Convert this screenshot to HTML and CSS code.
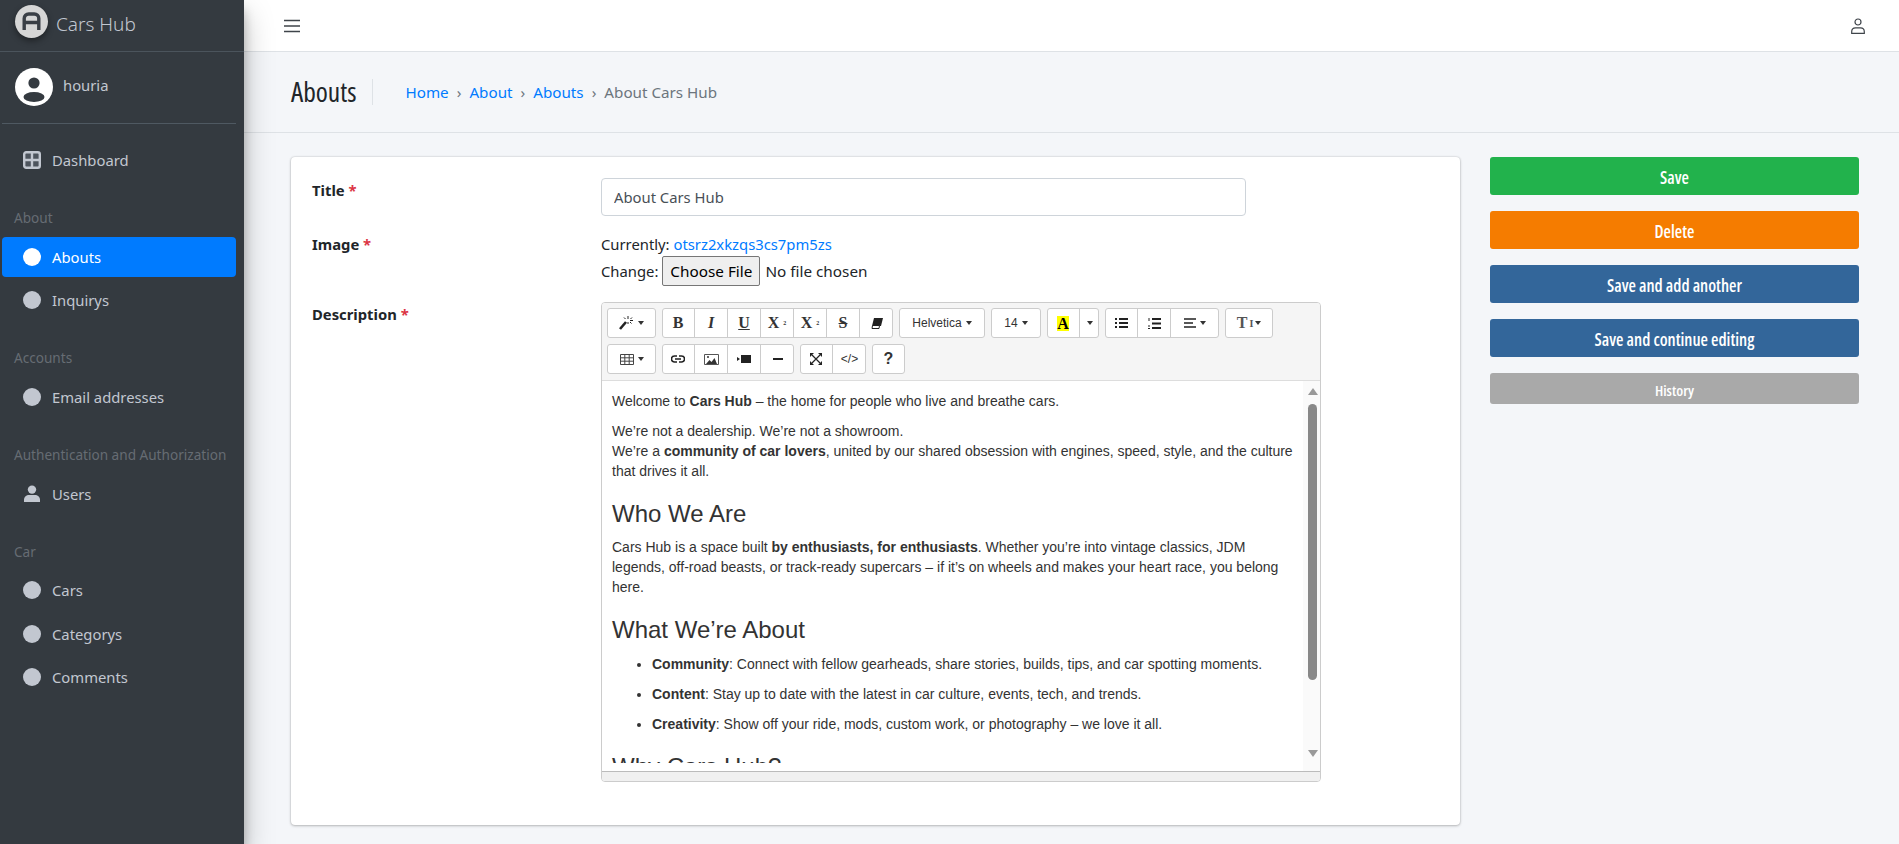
FILE: index.html
```html
<!DOCTYPE html>
<html lang="en">
<head>
    <meta charset="UTF-8">
    <meta name="viewport" content="width=device-width, initial-scale=1.0">
    <title>About Cars Hub</title>
    <link rel="stylesheet" href="styles.css">
</head>
<body>

<!-- Sidebar -->
<aside class="sidebar">
    <div class="brand">
        <span class="brand-logo">
            <svg width="19" height="19" viewBox="0 0 19 19"><path fill="none" stroke="#3a3f46" stroke-width="3.4" stroke-linejoin="round" d="M2.2 18V6.500a4.500 4.500 0 0 1 4.500-4.500h5.600a4.500 4.500 0 0 1 4.500 4.500V18M2.200 10.500h14.600"/></svg>
        </span>
        <span class="brand-name">Cars Hub</span>
    </div>

    <div class="user-panel">
        <svg class="avatar" width="38" height="38" viewBox="0 0 38 38"><circle cx="19" cy="19" r="19" fill="#fff"/><circle cx="19" cy="15" r="5.600" fill="#343a40"/><ellipse cx="19" cy="29" rx="10.500" ry="5" fill="#343a40"/></svg>
        <span class="user-name">houria</span>
    </div>

    <nav class="nav">
        <div class="nav-group">
            <a class="nav-item">
                <svg class="nav-icon" width="18" height="18" viewBox="0 0 18 18"><rect x="1.200" y="1.200" width="15.600" height="15.600" rx="2" fill="#4d545d" stroke="#c2c7d0" stroke-width="2.400"/><path fill="none" stroke="#c2c7d0" stroke-width="2.400" d="M9 1v16M1 9h16"/></svg>
                Dashboard
            </a>
        </div>
        <div class="nav-group">
            <div class="nav-header">About</div>
            <a class="nav-item active"><span class="dot"></span>Abouts</a>
            <a class="nav-item"><span class="dot"></span>Inquirys</a>
        </div>
        <div class="nav-group">
            <div class="nav-header">Accounts</div>
            <a class="nav-item"><span class="dot"></span>Email addresses</a>
        </div>
        <div class="nav-group">
            <div class="nav-header">Authentication and Authorization</div>
            <a class="nav-item">
                <svg class="nav-icon" width="18" height="18" viewBox="0 0 18 18"><circle cx="9" cy="4.600" r="4.200" fill="#c2c7d0"/><path fill="#c2c7d0" d="M1 17v-2.200C1 12 3.500 10 6 10h6c2.500 0 5 2 5 4.800V17z"/></svg>
                Users
            </a>
        </div>
        <div class="nav-group">
            <div class="nav-header">Car</div>
            <a class="nav-item"><span class="dot"></span>Cars</a>
            <a class="nav-item"><span class="dot"></span>Categorys</a>
            <a class="nav-item"><span class="dot"></span>Comments</a>
        </div>
    </nav>
</aside>

<div class="main">
    <!-- Top bar -->
    <header class="topbar">
        <svg width="16" height="14" viewBox="0 0 16 14"><path stroke="#3f444a" stroke-width="1.600" d="M0 1.500h16M0 7h16M0 12.500h16"/></svg>
        <svg width="14" height="16" viewBox="0 0 14 16"><circle cx="7" cy="4" r="3" fill="none" stroke="#3f444a" stroke-width="1.200"/><path fill="none" stroke="#3f444a" stroke-width="1.200" d="M.7 15.300v-1.600C.7 11 2.600 9.800 4.500 9.800h5c1.900 0 3.800 1.200 3.800 3.900v1.600z"/></svg>
    </header>

    <!-- Page title -->
    <div class="page-head">
        <h1 class="page-title">Abouts</h1>
        <div class="breadcrumb">
            <a>Home</a><span class="sep">›</span><a>About</a><span class="sep">›</span><a>Abouts</a><span class="sep">›</span><span>About Cars Hub</span>
        </div>
    </div>

    <div class="content">
        <form class="card">
            <div class="field field-title">
                <label class="field-label">Title <span class="req">*</span></label>
                <input class="text-input" type="text" value="About Cars Hub">
            </div>
            <div class="field field-image">
                <label class="field-label">Image <span class="req">*</span></label>
                <div class="file-box">
                    <div>Currently: <a>otsrz2xkzqs3cs7pm5zs</a></div>
                    <div class="file-change">Change: <input type="file"></div>
                </div>
            </div>
            <div class="field">
                <label class="field-label">Description <span class="req">*</span></label>

                <!-- Editor -->
                <div class="editor">
                    <div class="toolbar">
                        <div class="tool-row">
                            <div class="btn-group">
                                <span class="tool w49">
                                    <svg width="15" height="14" viewBox="0 0 15 14"><path stroke="#222" stroke-width="2.600" d="M1 13l6-7"/><path stroke="#222" d="M9 0v3M9 6v2M11 4.500h3M5 1.500l1.500 1.500M13 1.500l-1.500 1.500M12.500 7.500L11 6"/></svg>
                                    <i class="caret"></i>
                                </span>
                            </div>
                            <div class="btn-group">
                                <span class="tool serif">B</span>
                                <span class="tool serif"><em>I</em></span>
                                <span class="tool serif"><u>U</u></span>
                                <span class="tool serif">X<sup>2</sup></span>
                                <span class="tool serif">X<sub>2</sub></span>
                                <span class="tool serif"><s>S</s></span>
                                <span class="tool">
                                    <svg width="12" height="11" viewBox="0 0 12 11"><path fill="#222" d="M3 0h9l-2 8H1z"/><path fill="#fff" stroke="#222" d="M1.500 7.500h7l-.5 3H1z"/></svg>
                                </span>
                            </div>
                            <div class="btn-group"><span class="tool w86 plain">Helvetica <i class="caret"></i></span></div>
                            <div class="btn-group"><span class="tool w50 plain">14 <i class="caret"></i></span></div>
                            <div class="btn-group">
                                <span class="tool serif"><span class="hl">A</span></span>
                                <span class="tool w19"><i class="caret"></i></span>
                            </div>
                            <div class="btn-group">
                                <span class="tool">
                                    <svg width="13" height="10" viewBox="0 0 13 10"><path stroke="#222" stroke-width="2" d="M4 1h9M4 5h9M4 9h9M0 1h2M0 5h2M0 9h2"/></svg>
                                </span>
                                <span class="tool">
                                    <svg width="13" height="11" viewBox="0 0 13 11"><path stroke="#222" stroke-width="2" d="M4 1h9M4 5.500h9M4 10h9"/><path stroke="#222" d="M1 0v3M0 8h2M0 10.500h2"/></svg>
                                </span>
                                <span class="tool w48">
                                    <svg width="12" height="10" viewBox="0 0 12 10"><path stroke="#222" stroke-width="1.500" d="M0 1h12M0 5h9M0 9h12"/></svg>
                                    <i class="caret"></i>
                                </span>
                            </div>
                            <div class="btn-group">
                                <span class="tool w48 serif text-size">T<small>I</small><i class="caret"></i></span>
                            </div>
                        </div>
                        <div class="tool-row">
                            <div class="btn-group">
                                <span class="tool w49">
                                    <svg width="14" height="11" viewBox="0 0 14 11"><path fill="none" stroke="#444" d="M.5.500h13v10H.5zM.5 3.800h13M.5 7.200h13M4.800.5v10M9.200.5v10"/></svg>
                                    <i class="caret"></i>
                                </span>
                            </div>
                            <div class="btn-group">
                                <span class="tool">
                                    <svg width="14" height="8" viewBox="0 0 14 8"><path fill="none" stroke="#222" stroke-width="1.500" d="M6 1H3.500a3 3 0 0 0 0 6H6M8 1h2.500a3 3 0 0 1 0 6H8M4 4h6"/></svg>
                                </span>
                                <span class="tool">
                                    <svg width="15" height="11" viewBox="0 0 15 11"><path fill="none" stroke="#555" d="M.5.500h14v10H.5z"/><path fill="#333" d="M2 10l3.500-4 2 2 3-4L13 10z"/><circle cx="4" cy="3" r="1" fill="#333"/></svg>
                                </span>
                                <span class="tool">
                                    <svg width="14" height="8" viewBox="0 0 14 8"><path fill="#222" d="M4 0h10v8H4zM0 2l3 2-3 2z"/></svg>
                                </span>
                                <span class="tool">
                                    <svg width="10" height="2" viewBox="0 0 10 2"><path fill="#222" d="M0 0h10v2H0z"/></svg>
                                </span>
                            </div>
                            <div class="btn-group">
                                <span class="tool">
                                    <svg width="12" height="12" viewBox="0 0 12 12"><path stroke="#222" stroke-width="1.200" d="M2 2l8 8M10 2l-8 8"/><path fill="#222" d="M0 0h4L0 4zM12 0v4L8 0zM0 12V8l4 4zM12 12H8l4-4z"/></svg>
                                </span>
                                <span class="tool plain code">&lt;/&gt;</span>
                            </div>
                            <div class="btn-group"><span class="tool help">?</span></div>
                        </div>
                    </div>

                    <div class="editable">
                        <div class="editable-text">
                            <p>Welcome to <b>Cars Hub</b> – the home for people who live and breathe cars.</p>
                            <p>We’re not a dealership. We’re not a showroom.<br>We’re a <b>community of car lovers</b>, united by our shared obsession with engines, speed, style, and the culture that drives it all.</p>
                            <h2>Who We Are</h2>
                            <p>Cars Hub is a space built <b>by enthusiasts, for enthusiasts</b>. Whether you’re into vintage classics, JDM legends, off-road beasts, or track-ready supercars – if it’s on wheels and makes your heart race, you belong here.</p>
                            <h2>What We’re About</h2>
                            <ul>
                                <li><p><b>Community</b>: Connect with fellow gearheads, share stories, builds, tips, and car spotting moments.</p></li>
                                <li><p><b>Content</b>: Stay up to date with the latest in car culture, events, tech, and trends.</p></li>
                                <li><p><b>Creativity</b>: Show off your ride, mods, custom work, or photography – we love it all.</p></li>
                            </ul>
                            <h2>Why Cars Hub?</h2>
                        </div>
                        <div class="scrollbar">
                            <i class="arrow-up"></i>
                            <i class="thumb"></i>
                            <i class="arrow-down"></i>
                        </div>
                    </div>
                    <div class="statusbar"></div>
                </div>
            </div>
        </form>

        <!-- Actions -->
        <div class="actions">
            <button type="button" class="action green">Save</button>
            <button type="button" class="action orange">Delete</button>
            <button type="button" class="action blue">Save and add another</button>
            <button type="button" class="action blue">Save and continue editing</button>
            <button type="button" class="action grey">History</button>
        </div>
    </div>
</div>

</body>
</html>
```

FILE: styles.css
```css
* {
    box-sizing: border-box;
}

html, body {
    height: 100%;
}

body {
    margin: 0;
    display: flex;
    overflow: hidden;
    background-color: #f4f6f9;
    color: #212529;
    font-family: "Noto Sans", sans-serif;
    font-size: 14.8px;
}

a {
    color: #007bff;
}

/* Sidebar */
.sidebar {
    position: relative;
    z-index: 2;
    flex: 0 0 244px;
    background-color: #343a40;
    box-shadow: 0 14px 28px rgba(0, 0, 0, .25), 0 10px 10px rgba(0, 0, 0, .22);
    color: #c2c7d0;
}

.brand {
    display: flex;
    align-items: center;
    height: 52px;
    padding: 0 0 0 15px;
    border-bottom: 1px solid #4b545c;
    gap: 8px;
}

.brand-logo {
    display: flex;
    align-items: center;
    justify-content: center;
    width: 33px;
    height: 33px;
    margin-top: -8px;
    border-radius: 50%;
    background-color: #d6d6d6;
    box-shadow: 0 3px 6px rgba(0, 0, 0, .4);
}

.brand-name {
    margin-top: -4px;
    font-size: 19px;
    font-weight: 300;
}

.user-panel {
    display: flex;
    align-items: flex-start;
    height: 72px;
    margin: 0 8px 0 2px;
    padding: 16px 0 0 13px;
    border-bottom: 1px solid #4f5962;
    gap: 10px;
}

.user-name {
    margin-top: 7px;
}

.nav {
    padding: 16px 8px 0 2px;
}

.nav-group {
    display: flex;
    flex-direction: column;
    gap: 3.2px;
    margin-bottom: 18.6px;
}

.nav-header {
    height: 35px;
    padding: 9.6px 0 0 12px;
    color: #666c73;
    font-size: 13.6px;
}

.nav-item {
    display: flex;
    align-items: center;
    height: 40px;
    padding-left: 21px;
    border-radius: 4px;
    color: #c2c7d0;
    gap: 11px;
}

.nav-item.active {
    background-color: #007bff;
    color: #fff;
}

.dot {
    width: 18px;
    height: 18px;
    border-radius: 50%;
    background-color: #c2c7d0;
}

.active .dot {
    background-color: #fff;
}

/* Top bar and heading */
.main {
    flex: 1;
    min-width: 0;
}

.topbar {
    display: flex;
    align-items: center;
    justify-content: space-between;
    height: 52px;
    padding: 0 34px 0 40px;
    border-bottom: 1px solid #dee2e6;
    background-color: #fff;
}

.page-head {
    display: flex;
    align-items: center;
    height: 81px;
    padding-left: 47px;
    border-bottom: 1px solid #dee2e6;
}

.page-title {
    margin: 0;
    padding-right: 16px;
    border-right: 1px solid #dee2e6;
    font-family: "Open Sans", sans-serif;
    font-size: 27.5px;
    font-stretch: 75%;
    font-weight: 500;
    line-height: 26px;
}

.breadcrumb {
    margin-left: 32px;
    color: #6c757d;
    font-size: 15.2px;
}

.breadcrumb .sep {
    margin: 0 8px;
}

/* Form card */
.content {
    display: flex;
    align-items: flex-start;
    padding: 24px 40px 0 47px;
}

.card {
    flex: 0 0 1169px;
    height: 668px;
    padding: 21px 0 0 21px;
    border-radius: 4px;
    background-color: #fff;
    box-shadow: 0 0 2px rgba(0, 0, 0, .2), 0 1px 3px rgba(0, 0, 0, .22);
}

.field {
    display: flex;
    align-items: flex-start;
}

.field-title {
    height: 54px;
}

.field-image {
    height: 70px;
}

.field-label {
    flex: 0 0 289px;
    font-weight: 700;
    line-height: 20px;
    padding-top: 2px;
}

.req {
    color: #dc3545;
}

.text-input {
    width: 645px;
    height: 38px;
    padding: 0 12px;
    border: 1px solid #ced4da;
    border-radius: 4px;
    color: #495057;
    font: inherit;
}

.file-box {
    line-height: 20px;
    padding-top: 2px;
}

.file-change {
    display: flex;
    align-items: center;
    margin-top: 2px;
    gap: 4px;
}

.file-change input {
    font: inherit;
    font-size: 15.3px;
}

.file-change input::file-selector-button {
    height: 30px;
    margin-right: 5px;
    padding: 0 7px;
    border: 1px solid #767676;
    border-radius: 2px;
    background-color: #efefef;
    color: #000;
    font: inherit;
}

/* Editor */
.editor {
    width: 720px;
    height: 480px;
    border: 1px solid #ccc;
    border-radius: 4px;
    overflow: hidden;
    font-family: "Liberation Sans", sans-serif;
    font-size: 14px;
}

.toolbar {
    display: flex;
    flex-direction: column;
    height: 78px;
    padding: 5px 0 0 5px;
    border-bottom: 1px solid #ddd;
    background-color: #f5f5f5;
    gap: 6px;
}

.tool-row {
    display: flex;
    gap: 6px;
}

.btn-group {
    display: flex;
    height: 30px;
    border: 1px solid #ccc;
    border-radius: 3px;
    background-color: #fff;
}

.tool {
    display: flex;
    align-items: center;
    justify-content: center;
    flex: none;
    width: 33px;
    border-right: 1px solid #ccc;
    gap: 4px;
    color: #333;
}

.tool:first-child {
    margin-left: -1px;
}

.tool:last-child {
    margin-right: -1px;
    border-right: none;
}

.w19 { width: 19px; }
.w48 { width: 48px; }
.w49 { width: 49px; }
.w50 { width: 50px; }
.w86 { width: 86px; }

.plain {
    font-size: 12px;
}

.serif {
    font-family: "Liberation Serif", serif;
    font-size: 16px;
    font-weight: 700;
}

.serif sup, .serif sub {
    font-size: 6px;
    line-height: 0;
}

.text-size {
    color: #555;
    gap: 2px;
}

.text-size small {
    font-size: 10px;
}

.hl {
    display: block;
    width: 12px;
    height: 15px;
    background-color: #ff0;
    color: #000;
    line-height: 16px;
    text-align: center;
}

.help {
    font-size: 16px;
    font-weight: 700;
}

.caret {
    flex: none;
    width: 0;
    height: 0;
    border-top: 4px solid #333;
    border-left: 3px solid transparent;
    border-right: 3px solid transparent;
}

.editable {
    position: relative;
    height: 390px;
    color: #333;
    line-height: 20px;
}

.editable-text {
    height: 382px;
    padding: 10px 24px 0 10px;
    overflow: hidden;
}

.editable-text p {
    margin: 0 0 10px;
}

.editable-text h2 {
    margin: 20px 0 10px;
    font-size: 24px;
    font-weight: 400;
    line-height: 26px;
}

.editable-text ul {
    margin: 0 0 10px;
    padding: 1px 0 0 40px;
}

.scrollbar {
    position: absolute;
    top: 0;
    right: 0;
    bottom: 0;
    width: 17px;
    background-color: #fafafa;
}

.scrollbar i {
    position: absolute;
    display: block;
}

.arrow-up {
    top: 7px;
    left: 5px;
    border-bottom: 7px solid #999;
    border-left: 5px solid transparent;
    border-right: 5px solid transparent;
}

.arrow-down {
    bottom: 14px;
    left: 5px;
    border-top: 7px solid #999;
    border-left: 5px solid transparent;
    border-right: 5px solid transparent;
}

.thumb {
    top: 23px;
    left: 5px;
    width: 9px;
    height: 276px;
    border-radius: 5px;
    background-color: #888;
}

.statusbar {
    height: 10px;
    border-top: 1px solid #bbb;
    background-color: #f0f0f0;
}

/* Action buttons */
.actions {
    display: flex;
    flex-direction: column;
    flex: 0 0 369px;
    margin-left: 30px;
    gap: 16px;
}

.action {
    height: 38px;
    padding: 2px 0 0;
    border: none;
    border-radius: 3px;
    color: #fff;
    font-family: "Open Sans", sans-serif;
    font-size: 17px;
    font-stretch: 75%;
    font-weight: 600;
}

.green { background-color: #22b24c; }
.orange { background-color: #f57c00; }
.blue { background-color: #33669a; }

.grey {
    height: 31px;
    background-color: #a9a9a9;
    font-size: 15px;
}
```
